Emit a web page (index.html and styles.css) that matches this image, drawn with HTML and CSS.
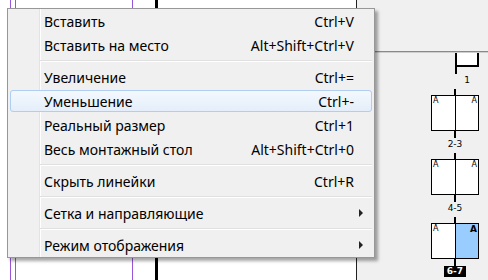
FILE: index.html
```html
<!DOCTYPE html>
<html lang="ru">
<head>
    <meta charset="UTF-8">
    <title>Меню вида</title>
    <link rel="stylesheet" href="styles.css">
</head>
<body>
    <div class="workspace">
        <div class="spread-area"></div>

        <div class="pages-panel">
            <div class="masters"></div>
            <div class="pages">
                <div class="single">
                    <div class="single-box"></div>
                    <div class="spine"></div>
                    <div class="num">1</div>
                </div>

                <div class="spread">
                    <div class="spine top"></div>
                    <div class="spread-box">
                        <div class="pg left"><span>A</span></div>
                        <div class="pg right"><span>A</span></div>
                    </div>
                    <div class="spine"></div>
                    <div class="num">2-3</div>
                </div>

                <div class="spread">
                    <div class="spine top"></div>
                    <div class="spread-box">
                        <div class="pg left"><span>A</span></div>
                        <div class="pg right"><span>A</span></div>
                    </div>
                    <div class="spine"></div>
                    <div class="num">4-5</div>
                </div>

                <div class="spread">
                    <div class="spine top"></div>
                    <div class="spread-box">
                        <div class="pg left"><span>A</span></div>
                        <div class="pg right selected"><span>A</span></div>
                    </div>
                    <div class="spine"></div>
                    <div class="num current">6-7</div>
                </div>
            </div>
        </div>
    </div>

    <!-- контекстное меню поверх рабочей области -->
    <div class="context-menu">
        <div class="item"><span class="label">Вставить</span><span class="key">Ctrl+V</span></div>
        <div class="item"><span class="label">Вставить на место</span><span class="key">Alt+Shift+Ctrl+V</span></div>
        <div class="sep"></div>
        <div class="item"><span class="label">Увеличение</span><span class="key">Ctrl+=</span></div>
        <div class="item hover"><span class="label">Уменьшение</span><span class="key">Ctrl+-</span></div>
        <div class="item"><span class="label">Реальный размер</span><span class="key">Ctrl+1</span></div>
        <div class="item"><span class="label">Весь монтажный стол</span><span class="key">Alt+Shift+Ctrl+0</span></div>
        <div class="sep"></div>
        <div class="item"><span class="label">Скрыть линейки</span><span class="key">Ctrl+R</span></div>
        <div class="sep"></div>
        <div class="item"><span class="label">Сетка и направляющие</span><span class="arrow"></span></div>
        <div class="sep"></div>
        <div class="item"><span class="label">Режим отображения</span><span class="arrow"></span></div>
    </div>
</body>
</html>
```

FILE: styles.css
```css
:root {
    --menu-bg: #f0f0f0;
    --panel-bg: #f0f0f0;
    --guide: #9b55d8;
}

body {
    margin: 0;
    width: 488px;
    height: 280px;
    overflow: hidden;
    position: relative;
    font-family: "Noto Sans", "Open Sans", sans-serif;
}

.workspace {
    display: flex;
    height: 280px;
}

.spread-area {
    width: 356px;
    background:
        linear-gradient(to right,
            transparent 10px, var(--guide) 10px 11px,
            transparent 11px 15px, var(--guide) 15px 16px,
            transparent 16px 132px, var(--guide) 132px 133px,
            transparent 133px 155px, #000 155px 158px,
            transparent 158px),
        #fff;
}

.pages-panel {
    flex: 1;
    display: flex;
    flex-direction: column;
    background: var(--panel-bg);
    border-left: 1px solid #222;
}

.masters {
    height: 53px;
    border-bottom: 1px solid #8a8a8a;
}

.pages {
    flex: 1;
    border-top: 1px solid #cfcfcf;
    display: flex;
    flex-direction: column;
    font-family: "DejaVu Sans", sans-serif;
}

.single {
    margin-left: 98px;
    width: 24px;
    display: flex;
    flex-direction: column;
    margin-bottom: 3px;
}

.single-box {
    height: 12px;
    border: 2px solid #000;
    border-top: none;
    background: #fff;
}

.single .spine {
    align-self: flex-start;
}

.spread {
    margin-left: 74px;
    width: 48px;
    display: flex;
    flex-direction: column;
    align-items: center;
    margin-bottom: 3px;
}

.spine {
    width: 1.5px;
    height: 7px;
    background: #000;
}

.spine.top {
    height: 6px;
}

.spread-box {
    width: 48px;
    height: 36px;
    box-sizing: border-box;
    border: 1.5px solid #000;
    display: flex;
}

.pg {
    flex: 1;
    background: #fff;
    display: flex;
    align-items: flex-start;
    font-family: "DejaVu Sans", sans-serif;
    font-size: 8px;
    line-height: 1;
    padding: 1px 1px;
}

.pg.right {
    justify-content: flex-end;
    border-left: 1.5px solid #000;
}

.pg.selected {
    background: #99ccff;
    font-weight: bold;
    font-size: 9px;
}

.num {
    height: 12px;
    font-size: 9px;
    line-height: 12px;
    text-align: center;
    color: #000;
}

.num.current {
    background: #000;
    color: #fff;
    font-weight: bold;
    padding: 0 3px;
    height: 11px;
    line-height: 11px;
}

/* меню */
.context-menu {
    position: absolute;
    left: 7px;
    top: 8px;
    width: 368px;
    box-sizing: border-box;
    display: flex;
    flex-direction: column;
    padding: 0 2px;
    border: 1px solid #979797;
    background:
        linear-gradient(to right,
            transparent 31px, #e2e3e3 31px 32px,
            #fff 32px 33px, transparent 33px),
        var(--menu-bg);
    box-shadow: 3px 3px 3px rgba(0, 0, 0, 0.35);
    font-size: 14px;
    color: #000;
}

.item {
    display: flex;
    align-items: center;
    height: 22px;
    margin: 1px 0;
    padding: 0 8px 0 33px;
    border: 1px solid transparent;
    box-sizing: border-box;
    border-radius: 3px;
    white-space: nowrap;
}

.item.hover {
    border-color: #b0cdf2;
    background: linear-gradient(#f4f8fd, #e4eefa);
}

.label {
    flex: 1;
}

.key {
    margin-right: 9px;
}

.arrow {
    width: 0;
    height: 0;
    border-left: 4px solid #222;
    border-top: 4px solid transparent;
    border-bottom: 4px solid transparent;
}

.sep {
    height: 2px;
    margin: 3px 0 3px 30px;
    background: linear-gradient(#e0e0e0 0 1px, #fff 1px 2px);
}
```
